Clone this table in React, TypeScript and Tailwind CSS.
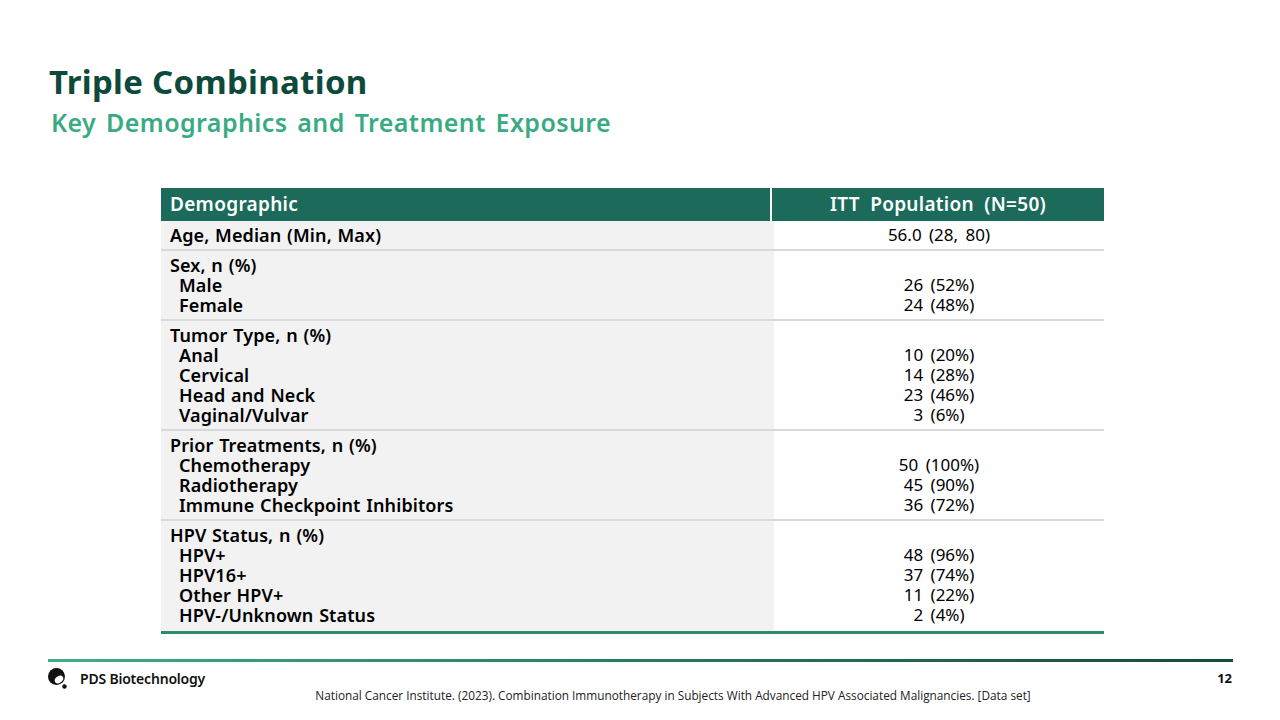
import React from "react";

type Row = { head: string; items: string[]; values: string[] };

const rows: Row[] = [
  { head: "Age, Median (Min, Max)", items: [], values: ["56.0 (28, 80)"] },
  { head: "Sex, n (%)", items: ["Male", "Female"], values: ["26 (52%)", "24 (48%)"] },
  {
    head: "Tumor Type, n (%)",
    items: ["Anal", "Cervical", "Head and Neck", "Vaginal/Vulvar"],
    values: ["10 (20%)", "14 (28%)", "23 (46%)", "3 (6%)"],
  },
  {
    head: "Prior Treatments, n (%)",
    items: ["Chemotherapy", "Radiotherapy", "Immune Checkpoint Inhibitors"],
    values: ["50 (100%)", "45 (90%)", "36 (72%)"],
  },
  {
    head: "HPV Status, n (%)",
    items: ["HPV+", "HPV16+", "Other HPV+", "HPV-/Unknown Status"],
    values: ["48 (96%)", "37 (74%)", "11 (22%)", "2 (4%)"],
  },
];

function Logo() {
  return (
    <svg width="19" height="21" viewBox="0 0 19 21">
      <circle cx="8.5" cy="8.5" r="8.5" fill="#111" />
      <ellipse cx="11" cy="11.5" rx="4.6" ry="3.3" fill="#fff" transform="rotate(-35 11 11.5)" />
      <circle cx="16.5" cy="18.5" r="2.2" fill="#111" />
    </svg>
  );
}

export default function App() {
  return (
    <div
      className="relative flex h-[720px] w-[1280px] flex-col overflow-hidden bg-white"
      style={{ fontFamily: "'Noto Sans', 'Open Sans', sans-serif" }}
    >
      {/* Titel */}
      <div className="pl-[49px] pt-[60px]">
        <h1 className="text-[33px] font-bold leading-[44px] tracking-[0.3px] text-[#0e4a3b]">
          Triple Combination
        </h1>
        <h2 className="mt-[1px] pl-[2px] text-[25px] font-semibold leading-[34px] tracking-[0.4px] text-[#39ab82] [word-spacing:3px]">
          Key Demographics and Treatment Exposure
        </h2>
      </div>

      {/* Tabel */}
      <div className="ml-[161px] mt-[49px] w-[943px] text-[17px] text-black">
        <div className="flex h-[33px] bg-[#1b6a5a] text-[19px] font-semibold tracking-[0.3px] text-white [word-spacing:3px]">
          <div className="flex w-[611px] items-center border-r-2 border-white pl-[9px]">Demographic</div>
          <div className="flex flex-1 items-center justify-center [word-spacing:5px]">ITT Population (N=50)</div>
        </div>
        {rows.map((r, i) => {
          const last = i === rows.length - 1;
          return (
            <div
              key={r.head}
              className={`flex ${last ? "border-b-[3px] border-[#2f8a6c]" : "border-b-2 border-[#d9d9d9]"}`}
            >
              <div
                className={`w-[613px] bg-[#f2f2f2] pl-[9px] pt-[4px] text-[18px] font-semibold leading-[20px] tracking-[0.1px] [word-spacing:1px] ${last ? "pb-[6px]" : "pb-[4px]"}`}
              >
                <div>{r.head}</div>
                {r.items.map((it) => (
                  <div key={it} className="pl-[9px]">
                    {it}
                  </div>
                ))}
              </div>
              <div className="flex-1 pt-[4px] text-center leading-[20px] [word-spacing:3px]">
                {r.items.length > 0 && <div>&nbsp;</div>}
                {r.values.map((v) => (
                  <div key={v}>{v}</div>
                ))}
              </div>
            </div>
          );
        })}
      </div>

      {/* Footer */}
      <div className="ml-[48px] mt-[25px] h-[3px] w-[1185px] bg-gradient-to-r from-[#3dae85] to-[#184a3c]" />
      <div className="flex items-center px-[48px] pt-[6px]">
        <div className="flex items-center gap-[13px]">
          <Logo />
          <span className="text-[14px] font-semibold tracking-[-0.2px] text-[#111]">PDS Biotechnology</span>
        </div>
        <div className="flex-1" />
        <span className="text-[13px] font-bold text-[#111]">12</span>
      </div>
      <div
        className="-mt-[2px] pl-[66px] text-center text-[11.8px] text-[#222]"
        style={{ fontFamily: "'Open Sans', sans-serif" }}
      >
        National Cancer Institute. (2023). Combination Immunotherapy in Subjects With Advanced HPV Associated Malignancies. [Data set]
      </div>
    </div>
  );
}
